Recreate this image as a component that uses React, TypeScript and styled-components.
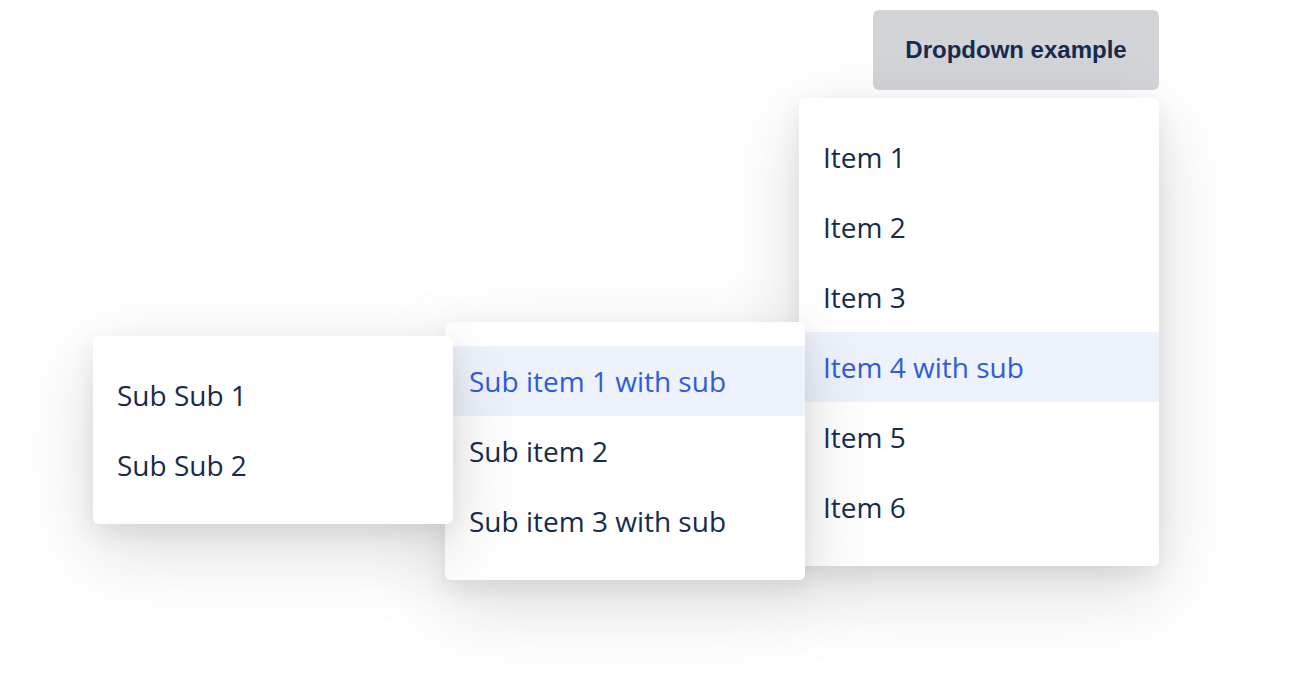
import React from "react";
import styled, { createGlobalStyle } from "styled-components";

const Global = createGlobalStyle`
  html, body { margin: 0; padding: 0; background: #ffffff; }
  body { font-family: "Open Sans", "Noto Sans", sans-serif; }
`;

const Page = styled.div`
  display: flex;
  justify-content: flex-end;
  align-items: flex-start;
  padding: 10px 130px 0 0;
  height: 674px;
  box-sizing: border-box;
`;

const Anchor = styled.div`
  position: relative;
  display: flex;
`;

const Trigger = styled.button`
  width: 286px;
  height: 80px;
  border: none;
  border-radius: 6px;
  background: #d3d4d8;
  color: #172b4d;
  font-family: "Liberation Sans", Arial, sans-serif;
  font-weight: 700;
  font-size: 24px;
  cursor: pointer;
`;

const Menu = styled.ul<{ $top: string; $right: string }>`
  position: absolute;
  top: ${(p) => p.$top};
  right: ${(p) => p.$right};
  width: 360px;
  margin: 0;
  padding: 24px 0;
  list-style: none;
  background: #ffffff;
  border-radius: 6px;
  box-shadow: 0 24px 80px rgba(0, 0, 0, 0.14), 0 10px 24px rgba(0, 0, 0, 0.08);
  box-sizing: border-box;
`;

const Item = styled.li<{ $active?: boolean }>`
  position: relative;
  height: 70px;
  display: flex;
  align-items: center;
  padding: 0 24px;
  font-size: 28px;
  color: ${(p) => (p.$active ? "#2f5cdb" : "#172b4d")};
  background: ${(p) => (p.$active ? "#edf2fd" : "transparent")};
`;

export default function App() {
  return (
    <>
      <Global />
      <Page>
        <Anchor>
          <Trigger>Dropdown example</Trigger>
          <Menu $top="calc(100% + 8px)" $right="0">
            <Item>Item 1</Item>
            <Item>Item 2</Item>
            <Item>Item 3</Item>
            <Item $active>
              Item 4 with sub
              <Menu $top="-10px" $right="calc(100% - 6px)">
                <Item $active>
                  Sub item 1 with sub
                  <Menu $top="-10px" $right="calc(100% - 8px)">
                    <Item>Sub Sub 1</Item>
                    <Item>Sub Sub 2</Item>
                  </Menu>
                </Item>
                <Item>Sub item 2</Item>
                <Item>Sub item 3 with sub</Item>
              </Menu>
            </Item>
            <Item>Item 5</Item>
            <Item>Item 6</Item>
          </Menu>
        </Anchor>
      </Page>
    </>
  );
}
